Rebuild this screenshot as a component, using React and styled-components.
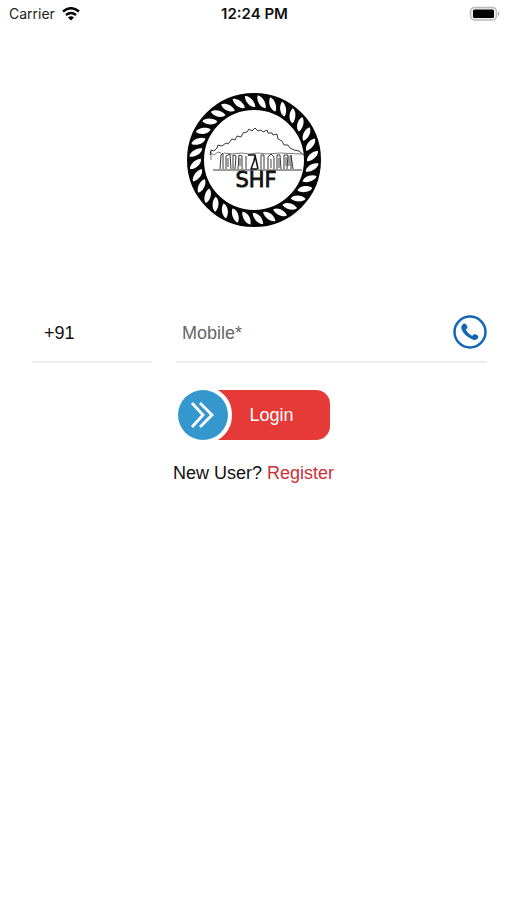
import React, { useState } from 'react';
import styled, { createGlobalStyle } from 'styled-components';

const GlobalStyle = createGlobalStyle`
  *, *::before, *::after { box-sizing: border-box; }
  body {
    margin: 0;
    background: #fff;
    color: #111;
    font-family: "Liberation Sans", Arial, sans-serif;
    font-size: 18px;
  }
`;

const Screen = styled.div`
  display: flex;
  flex-direction: column;
  min-height: 100vh;
  background: #fff;
`;

const StatusBar = styled.header`
  display: grid;
  grid-template-columns: 1fr auto 1fr;
  align-items: center;
  height: 28px;
  padding: 0 7px 0 9px;
  font-family: Inter, "Liberation Sans", sans-serif;
  font-size: 14px;
  line-height: 20px;
  color: #222;
`;

const Carrier = styled.div`
  display: flex;
  align-items: center;
  gap: 7px;
`;

const Clock = styled.time`
  font-size: 15px;
  font-weight: 600;
  color: #111;
`;

const Battery = styled.svg`
  justify-self: end;
`;

const Main = styled.main`
  display: flex;
  flex-direction: column;
  align-items: center;
`;

const Logo = styled.svg`
  margin-top: 58px;
`;

const Form = styled.form`
  display: flex;
  flex-direction: column;
  align-items: center;
  width: 100%;
  padding: 0 20px 0 32px;
  margin-top: 68px;
`;

const Fields = styled.div`
  display: flex;
  gap: 24px;
  width: 100%;
`;

const Field = styled.label`
  display: flex;
  align-items: center;
  flex: ${({ $wide }) => ($wide ? '1 1 0' : '0 0 120px')};
  min-width: 0;
  height: 61px;
  padding-left: ${({ $wide }) => ($wide ? '6px' : '12px')};
  border-bottom: 2px solid #ececec;
`;

const Input = styled.input`
  flex: 1;
  min-width: 0;
  width: 100%;
  padding: 2px 0 0;
  border: 0;
  outline: 0;
  background: transparent;
  font: inherit;
  line-height: 24px;
  color: #111;
  &::placeholder { color: #666; opacity: 1; }
`;

const LoginButton = styled.button`
  display: flex;
  align-items: center;
  width: 152px;
  height: 50px;
  margin: 27px 0 0 -12px;
  padding: 0;
  border: 0;
  border-radius: 0 14px 14px 0;
  background: #e53a38;
  color: #fff;
  font: inherit;
  overflow: hidden;
  cursor: pointer;
`;

const ArrowDisc = styled.svg`
  flex: none;
`;

const ButtonText = styled.span`
  flex: 1;
  padding-right: 18px;
`;

const Signup = styled.p`
  margin: 21px 0 0 -12px;
  line-height: 24px;
`;

const RegisterLink = styled.a`
  color: #cc3035;
  text-decoration: none;
`;

const leaves = Array.from({ length: 32 }, (_, i) => i * 11.25 - 4);

function Emblem() {
  return (
    <Logo width="148" height="148" viewBox="0 0 148 148" role="img" aria-label="SHF">
      <circle cx="74" cy="74" r="58.5" fill="#fff" stroke="#050505" strokeWidth="17" />
      <g fill="#fff">
        {leaves.map((a) => (
          <path key={a} transform={`rotate(${a} 74 74) translate(74 15.5) rotate(-38)`} d="M0-7.5C3.500-5.500 4.300 3 .5 7.500C-3.500 5.500-4.300-3 0-7.500Z" />
        ))}
      </g>
      <g fill="none" stroke="#222" strokeWidth="0.9" strokeLinejoin="round">
        <path d="M30 69l1-5 3 1 3-3 1-3 4 1 4-3 2 1 4-5 3 1 2-4 4 1 2-4 4-1 2-3 3 2 3-3 3 3 3-1 2 2 4-2 1 3 4 0 1 2 4-1 1 5 4 2 2 4 4 0 2 3 4 2 5 1 7 6" />
        <path d="M31 65v9M31 67l3 2 4-3 3 1M44 67l8 1 9-1 8 1 9-1 10 1 12-1 22 1" strokeWidth="0.6" />
        <path d="M33 84h89" />
        <path d="M40 83l1-14 2-2v16M46 83V70l4-2 1 15M53 83V69l3 1-1 13M58 83l1-14 3 1v13M66 83V70M81 83V69l3 0v14M88 83V71l3-3 3 3v12M97 83l0-14 3 0 1 14M104 83V69l4 0-1 14M111 83V69l2 14" />
        <path d="M48 72v9M60 72v8M91 73v9M106 71v9M99 72v10M109 70v10" strokeWidth="1.2" stroke="#666" />
        <path d="M68 69l7 0 3 14M75 70l-1 5-3 8h6" stroke="#111" strokeWidth="1.5" />
      </g>
      <text x="76" y="101" textAnchor="middle" fontFamily="DejaVu Sans, sans-serif" fontSize="21" fill="#111" stroke="#111" strokeWidth="0.8">SHF</text>
    </Logo>
  );
}

export default function App() {
  const [code, setCode] = useState('+91');
  const [mobile, setMobile] = useState('');
  return (
    <Screen>
      <GlobalStyle />
      <StatusBar>
        <Carrier>
          Carrier
          <svg width="18" height="14" viewBox="0 0 18 14" aria-hidden="true">
            <g fill="none" stroke="#050505" strokeWidth="2.5">
              <path d="M1 4.500Q9-2 17 4.500" />
              <path d="M4 8Q9 4 14 8" />
            </g>
            <path d="M6 10.500Q9 8 12 10.500L9 13.500Z" />
          </svg>
        </Carrier>
        <Clock>12:24 PM</Clock>
        <Battery width="31" height="16" viewBox="0 0 31 16" aria-label="Battery full" role="img">
          <rect x="1.500" y="1.500" width="26" height="12.500" rx="4" fill="#eee" stroke="#bbb" strokeWidth="1.500" />
          <rect x="4" y="3.500" width="21" height="8.500" rx="1.500" fill="#000" />
          <path d="M29 5.500q3 2.200 0 4.500z" fill="#aaa" />
        </Battery>
      </StatusBar>
      <Main>
        <Emblem />
        <Form onSubmit={(e) => e.preventDefault()}>
          <Fields>
            <Field>
              <Input aria-label="Country code" value={code} onChange={(e) => setCode(e.target.value)} />
            </Field>
            <Field $wide>
              <Input aria-label="Mobile" type="tel" placeholder="Mobile*" value={mobile} onChange={(e) => setMobile(e.target.value)} />
              <svg width="34" height="34" viewBox="1 1 34 34" aria-hidden="true">
                <circle cx="18" cy="18" r="15.500" fill="none" stroke="#1167b5" strokeWidth="2.500" />
                <path d="M10 11L12 9.500Q13.500 9 14.500 11L15.500 13Q15.500 14.500 13.700 15.600Q15.500 19.500 20.200 22Q21.500 20 23 20L26 21.800Q27 23 25.500 24.800Q23.500 27 19.500 25Q11.500 21 9.500 15Q8.800 12.500 10 11Z" fill="#1167b5" />
              </svg>
            </Field>
          </Fields>
          <LoginButton type="submit">
            <ArrowDisc width="54" height="50" viewBox="0 0 54 50" aria-hidden="true">
              <path d="M0 0H40Q54 9 54 25T40 50H0Z" fill="#fff" />
              <circle cx="25" cy="25" r="25" fill="#3498ce" />
              <path d="M14 13L25 25L14 37M22 13L34 25L22 37" fill="none" stroke="#fff" strokeWidth="2.800" />
            </ArrowDisc>
            <ButtonText>Login</ButtonText>
          </LoginButton>
          <Signup>New User? <RegisterLink href="#register">Register</RegisterLink></Signup>
        </Form>
      </Main>
    </Screen>
  );
}
